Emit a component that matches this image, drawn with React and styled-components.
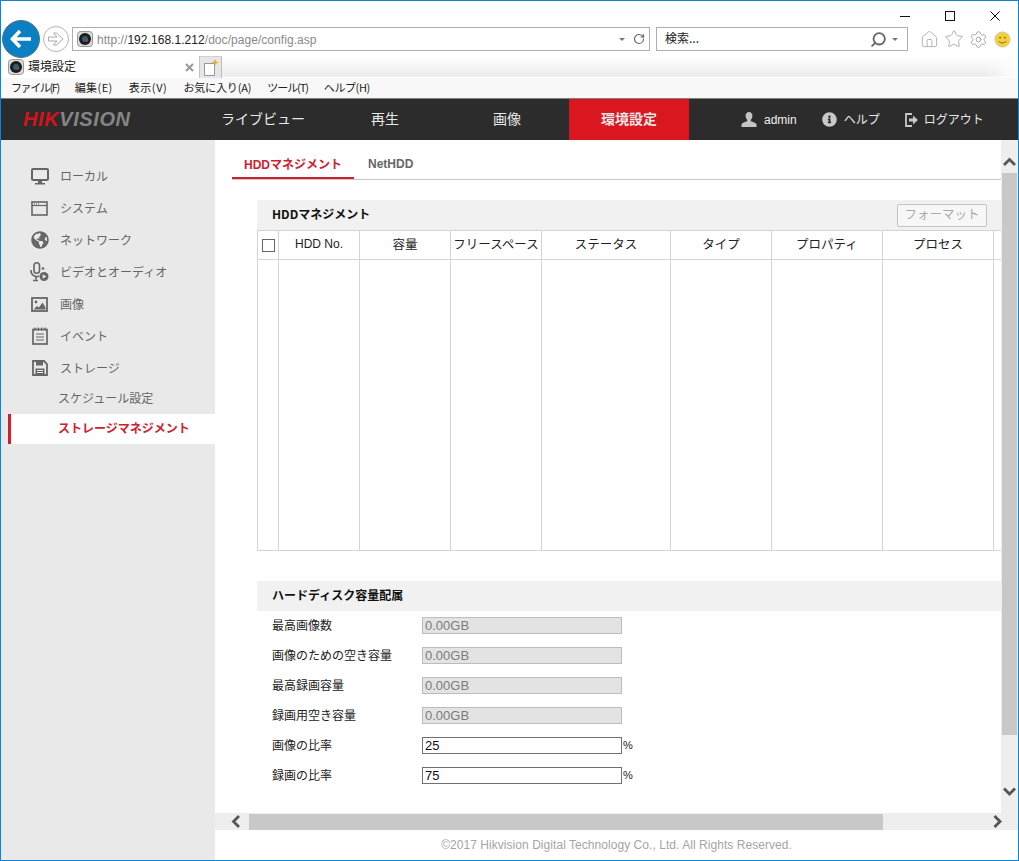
import React from 'react';
import styled, { createGlobalStyle } from 'styled-components';
import { FaGlobeAmericas, FaInfoCircle } from 'react-icons/fa';
import { House, Star, Settings, RotateCw, Search } from 'lucide-react';

const GlobalStyle = createGlobalStyle`
  html, body {
    margin: 0;
    padding: 0;
    background: #fff;
    overflow: hidden;
  }
  * {
    box-sizing: border-box;
  }
`;

const cjk = `"Noto Sans CJK JP", "Liberation Sans", sans-serif`;
const latin = `"Liberation Sans", "Noto Sans CJK JP", sans-serif`;

const Window = styled.div`
  width: 1019px;
  height: 861px;
  border: 1px solid #0f83d8;
  display: flex;
  flex-direction: column;
  overflow: hidden;
  font-family: ${cjk};
  font-size: 12px;
  color: #222;
`;

const TitleBar = styled.div`
  height: 21px;
  flex: none;
  display: flex;
  justify-content: flex-end;
  align-items: flex-start;
  gap: 35px;
  padding: 10px 18px 0 0;
`;

const WinButton = styled.svg`
  width: 10px;
  height: 10px;
  display: block;
`;

const NavBar = styled.div`
  height: 34px;
  flex: none;
  display: flex;
  align-items: center;
  position: relative;
  z-index: 2;
  padding-left: 1px;
`;

const BackButton = styled.div`
  width: 38px;
  height: 38px;
  border-radius: 50%;
  background: #0a7fc4;
  border: 1px solid #5c6f7c;
  display: flex;
  align-items: center;
  justify-content: center;
`;

const ForwardButton = styled.div`
  width: 26px;
  height: 26px;
  margin-left: 3px;
  border-radius: 50%;
  background: #fff;
  border: 1px solid #b5b5b5;
  display: flex;
  align-items: center;
  justify-content: center;
`;

const AddressBox = styled.div`
  width: 578px;
  height: 24px;
  margin-left: 3px;
  border: 1px solid #adadad;
  display: flex;
  align-items: center;
  padding: 0 4px;
  font-family: ${latin};
  font-size: 12px;
  letter-spacing: 0.05px;
  color: #8a8a8a;
`;

const Host = styled.span`
  color: #222;
`;

const AddressText = styled.div`
  flex: 1;
  margin-left: 4px;
  padding-top: 1px;
`;

const Caret = styled.span`
  width: 0;
  height: 0;
  border-left: 3px solid transparent;
  border-right: 3px solid transparent;
  border-top: 3px solid #777;
  margin: 0 8px 0 5px;
`;

const SearchCaret = styled(Caret)`
  margin: 0 0 0 5px;
`;

const SearchBox = styled.div`
  width: 252px;
  height: 24px;
  margin-left: 6px;
  border: 1px solid #adadad;
  display: flex;
  align-items: center;
  padding: 0 9px 0 8px;
  font-size: 12px;
`;

const SearchText = styled.div`
  flex: 1;
  padding-bottom: 3px;
`;

const Mirror = styled.span`
  display: flex;
  transform: scaleX(-1);
`;

const ToolIcons = styled.div`
  display: flex;
  align-items: center;
  gap: 5px;
  margin-left: 12px;
`;

const Smiley = styled.svg`
  width: 17px;
  height: 17px;
  margin-left: 1px;
  display: block;
`;

const TabRow = styled.div`
  height: 22px;
  flex: none;
  display: flex;
  align-items: stretch;
  padding-left: 1px;
`;

const TabFade = styled.div`
  flex: 1;
  background:
    linear-gradient(to right, rgba(255, 255, 255, 0) 96%, #fff 100%),
    linear-gradient(to bottom, #fff 0, #ececec 90%, #fff 100%);
`;

const Tab = styled.div`
  width: 198px;
  background: #fff;
  display: flex;
  align-items: center;
  padding: 0 5px 0 6px;
  gap: 4px;
  border-right: 1px solid #c4c4c4;
`;

const TabTitle = styled.div`
  flex: 1;
  font-size: 12px;
  padding-bottom: 4px;
`;

const TabClose = styled.svg`
  width: 9px;
  height: 9px;
`;

const NewTab = styled.div`
  width: 22px;
  background: #e6e6e6;
  border-right: 1px solid #bdbdbd;
  border-top: 1px solid #d0d0d0;
  display: flex;
  align-items: center;
  justify-content: center;
`;

const MenuBar = styled.div`
  height: 21px;
  flex: none;
  display: flex;
  align-items: center;
  gap: 16px;
  padding: 0 0 2px 10px;
  background: #f8f8f8;
  border-bottom: 1px solid #7f7f7f;
  font-size: 11px;
  color: #222;
`;

const MenuItem = styled.span`
  letter-spacing: ${(p) => p.$tracking}px;
`;

const Header = styled.div`
  height: 41px;
  flex: none;
  background: #2c2c2c;
  display: flex;
  align-items: stretch;
`;

const Logo = styled.div`
  width: 202px;
  padding-left: 22px;
  display: flex;
  align-items: center;
  font-family: ${latin};
  font-size: 20px;
  font-weight: bold;
  font-style: italic;
  letter-spacing: 0.6px;
  color: #858585;
`;

const LogoRed = styled.span`
  color: #d3141c;
`;

const MainNav = styled.div`
  display: flex;
  gap: 2px;
`;

const NavItem = styled.div`
  width: 120px;
  padding-bottom: 3px;
  display: flex;
  align-items: center;
  justify-content: center;
  font-size: 14px;
  font-weight: ${(p) => (p.$active ? 'bold' : 'normal')};
  color: #e8e8e8;
  background: ${(p) => (p.$active ? '#da161e' : 'transparent')};
`;

const UserNav = styled.div`
  display: flex;
  align-items: center;
  margin-left: 52px;
  color: #e8e8e8;
  font-size: 12px;
`;

const UserItem = styled.div`
  display: flex;
  align-items: center;
  gap: ${(p) => p.$gap}px;
  margin-right: 25px;
`;

const UserLabel = styled.span`
  padding-bottom: 2px;
`;

const AdminName = styled.span`
  font-family: ${latin};
  font-size: 12px;
  color: #f0f0f0;
`;

const Body = styled.div`
  flex: 1;
  display: flex;
  min-height: 0;
`;

const Sidebar = styled.div`
  width: 214px;
  flex: none;
  background: #e9e9e9;
  padding-top: 20px;
`;

const SideItem = styled.div`
  height: 32px;
  display: flex;
  align-items: center;
  padding-left: 29px;
  gap: 11px;
  color: #666;
  font-size: 12px;
`;

const SideLabel = styled.span`
  padding-bottom: 2px;
`;

const SideIcon = styled.span`
  width: 19px;
  display: flex;
  justify-content: center;
  align-items: center;
`;

const SubItem = styled.div`
  height: 30px;
  margin-left: 7px;
  padding-left: ${(p) => (p.$active ? 47 : 50)}px;
  padding-bottom: 3px;
  display: flex;
  align-items: center;
  font-size: 12px;
  color: ${(p) => (p.$active ? '#cf2030' : '#666')};
  font-weight: ${(p) => (p.$active ? 'bold' : 'normal')};
  background: ${(p) => (p.$active ? '#fff' : 'transparent')};
  border-left: ${(p) => (p.$active ? '3px solid #cf2030' : 'none')};
`;

const Content = styled.div`
  flex: 1;
  min-width: 0;
  display: flex;
  flex-direction: column;
`;

const ViewRow = styled.div`
  flex: 1;
  min-height: 0;
  display: flex;
`;

const Page = styled.div`
  flex: 1;
  min-width: 0;
  overflow: hidden;
  padding-top: 10px;
`;

const Tabs = styled.div`
  height: 30px;
  margin-left: 17px;
  border-bottom: 1px solid #c8c8c8;
  display: flex;
`;

const PageTab = styled.div`
  height: 29px;
  padding: 0 12px 1px;
  display: flex;
  align-items: center;
  font-size: 12px;
  font-weight: bold;
  color: ${(p) => (p.$active ? '#cf2030' : '#666')};
  border-bottom: ${(p) => (p.$active ? '2px solid #cf2030' : 'none')};
  margin-right: 2px;
  font-family: ${latin};
`;

const Section = styled.div`
  margin: ${(p) => p.$top}px 0 0 42px;
`;

const SectionHead = styled.div`
  height: 30px;
  background: #f1f1f1;
  display: flex;
  align-items: center;
  justify-content: space-between;
  padding: 0 14px 0 15px;
  font-size: 12px;
  font-weight: bold;
  color: #111;
`;

const HeadTitle = styled.span`
  padding-bottom: 3px;
`;

const FormatButton = styled.div`
  width: 90px;
  height: 23px;
  padding-bottom: 3px;
  border: 1px solid #c4c4c4;
  border-radius: 2px;
  background: #f7f7f7;
  color: #aaa;
  font-size: 12.5px;
  font-weight: normal;
  display: flex;
  align-items: center;
  justify-content: center;
`;

const Table = styled.div`
  width: 800px;
  border-left: 1px solid #d4d4d4;
  border-top: 1px solid #d4d4d4;
`;

const Row = styled.div`
  display: grid;
  grid-template-columns: 21px 81px 91px 91px 129px 101px 111px 111px 1fr;
  height: ${(p) => p.$height}px;
  border-bottom: 1px solid #d4d4d4;
`;

const Cell = styled.div`
  border-right: 1px solid #d4d4d4;
  padding-bottom: 3px;
  display: flex;
  align-items: center;
  justify-content: center;
  font-size: 12.5px;
  color: #222;
  white-space: nowrap;
`;

const LatinCell = styled(Cell)`
  font-family: ${latin};
  font-size: 12px;
  padding-bottom: 2px;
`;

const Check = styled.span`
  width: 13px;
  height: 13px;
  margin-top: 3px;
  border: 1px solid #666;
  background: #fff;
`;

const FormRow = styled.div`
  height: 30px;
  display: flex;
  align-items: center;
  padding: 0 0 2px 15px;
`;

const FormLabel = styled.div`
  width: 150px;
  padding-bottom: 2px;
  font-size: 12px;
  color: #222;
`;

const Field = styled.div`
  width: 200px;
  height: 17px;
  padding-left: 2px;
  display: flex;
  align-items: center;
  font-family: ${latin};
  font-size: 13px;
  border: 1px solid ${(p) => (p.$off ? '#bcbcbc' : '#707070')};
  background: ${(p) => (p.$off ? '#e3e3e3' : '#fff')};
  color: ${(p) => (p.$off ? '#7c7c7c' : '#111')};
`;

const Unit = styled.span`
  margin-left: 1px;
  font-family: ${latin};
  font-size: 11px;
`;

const VScroll = styled.div`
  width: 17px;
  flex: none;
  background: #eee;
  display: flex;
  flex-direction: column;
  align-items: center;
  padding-top: 15px;
`;

const VThumb = styled.div`
  width: 15px;
  height: 562px;
  margin: 3px 0 49px;
  flex: none;
  background: #c8c8c8;
`;

const HScroll = styled.div`
  height: 17px;
  flex: none;
  background: #eee;
  display: flex;
  align-items: center;
  padding-left: 14px;
`;

const HThumb = styled.div`
  width: 634px;
  height: 16px;
  margin: 0 107px 0 5px;
  background: #c8c8c8;
`;

const ChevronSvg = styled.svg`
  width: 15px;
  height: 15px;
  flex: none;
`;

const Footer = styled.div`
  height: 30px;
  flex: none;
  display: flex;
  align-items: center;
  justify-content: center;
  font-family: ${latin};
  font-size: 12px;
  letter-spacing: 0.05px;
  color: #a5a5a5;
`;

const CameraIcon = () => (
  <svg width="16" height="16" viewBox="0 0 16 16">
    <rect x="0.5" y="0.5" width="15" height="15" rx="3" fill="#d9d9d9" stroke="#999" />
    <circle cx="8" cy="8" r="6" fill="#1c1c1c" />
    <circle cx="8" cy="8" r="3" fill="#2f5f7e" />
    <circle cx="10" cy="9.5" r="1.3" fill="#c0303a" />
  </svg>
);

const Chevron = ({ dir }) => {
  const paths = {
    up: 'M2 10 L7.5 4.5 L13 10',
    down: 'M2 4.5 L7.5 10 L13 4.5',
    left: 'M10 2 L4.5 7.5 L10 13',
    right: 'M4.5 2 L10 7.5 L4.5 13',
  };
  return (
    <ChevronSvg viewBox="0 0 15 15">
      <path d={paths[dir]} fill="none" stroke="#555" strokeWidth="2.8" />
    </ChevronSvg>
  );
};

const MonitorIcon = () => (
  <svg width="18" height="17" viewBox="0 0 18 17">
    <rect x="1" y="1" width="16" height="11" rx="1" fill="none" stroke="#666" strokeWidth="2" />
    <path d="M7 13 h4 v2 h3 v1.5 h-10 v-1.5 h3 z" fill="#666" />
  </svg>
);

const SystemIcon = () => (
  <svg width="17" height="15" viewBox="0 0 17 15">
    <rect x="1" y="1" width="15" height="13" fill="none" stroke="#666" strokeWidth="1.6" />
    <path d="M1 4.5 h15" stroke="#666" strokeWidth="1.2" />
    <path d="M3 3 h1 M5 3 h1 M7 3 h1" stroke="#666" strokeWidth="1" />
  </svg>
);

const MicIcon = () => (
  <svg width="19" height="20" viewBox="0 0 19 20">
    <rect x="4" y="0.8" width="5.5" height="10.5" rx="2.7" fill="none" stroke="#666" strokeWidth="1.6" />
    <path d="M1 8 v1 a5.6 5.6 0 0 0 8 5" fill="none" stroke="#666" strokeWidth="1.6" />
    <path d="M6 15 v2.5 M3 18.5 h5" stroke="#666" strokeWidth="1.6" />
    <circle cx="13" cy="6.5" r="1.3" fill="#666" />
    <circle cx="14" cy="14.5" r="4.5" fill="#666" />
    <path d="M12.7 12.2 l3.6 2.3 l-3.6 2.3 z" fill="#e9e9e9" />
  </svg>
);

const ImageIcon = () => (
  <svg width="17" height="15" viewBox="0 0 17 15">
    <rect x="1" y="1" width="15" height="13" fill="none" stroke="#666" strokeWidth="1.8" />
    <circle cx="5" cy="5" r="1.4" fill="#666" />
    <path d="M2.5 12.5 l3.5 -3.5 l2 1.5 l3.5 -5 l3 5 v2 z" fill="#666" />
  </svg>
);

const EventIcon = () => (
  <svg width="16" height="18" viewBox="0 0 16 18">
    <rect x="1" y="2.5" width="14" height="14.5" fill="none" stroke="#666" strokeWidth="1.7" />
    <path d="M3 0.5 v3 M6.3 0.5 v3 M9.7 0.5 v3 M13 0.5 v3" stroke="#666" strokeWidth="1.3" />
    <path d="M4 7 h8 M4 10 h8 M4 13 h8" stroke="#666" strokeWidth="1.2" />
  </svg>
);

const SaveIcon = () => (
  <svg width="16" height="16" viewBox="0 0 16 16">
    <path d="M1 1 h11 l3 3 v11 h-14 z" fill="none" stroke="#666" strokeWidth="1.8" />
    <path d="M4 1 h7 v4.5 h-7 z" fill="#666" />
    <rect x="3.5" y="8.5" width="9" height="6" fill="#666" />
    <path d="M5 10.5 h6 M5 12.5 h6" stroke="#e9e9e9" strokeWidth="1" />
  </svg>
);

const UserIcon = () => (
  <svg width="16" height="15" viewBox="0 0 16 15">
    <path d="M8 0 a3.4 3.4 0 0 1 3.4 3.8 c0 2 -1 3.4 -1.6 4 v1.4 c2 .6 5.2 1.6 5.7 3 v2.8 h-15 v-2.8 c.5 -1.4 3.7 -2.4 5.7 -3 v-1.4 c-.6 -.6 -1.6 -2 -1.6 -4 a3.4 3.4 0 0 1 3.4 -3.8 z" fill="#c4c4c4" />
  </svg>
);

const LogoutIcon = () => (
  <svg width="13" height="14" viewBox="0 0 13 14">
    <path d="M7 1 h-6 v12 h6" fill="none" stroke="#c8c8c8" strokeWidth="1.8" />
    <path d="M4 5.5 h4 v-3 l5 4.5 l-5 4.5 v-3 h-4 z" fill="#c8c8c8" />
  </svg>
);

const sideItems = [
  { label: 'ローカル', icon: <MonitorIcon /> },
  { label: 'システム', icon: <SystemIcon /> },
  { label: 'ネットワーク', icon: <FaGlobeAmericas size={18} color="#666" /> },
  { label: 'ビデオとオーディオ', icon: <MicIcon /> },
  { label: '画像', icon: <ImageIcon /> },
  { label: 'イベント', icon: <EventIcon /> },
  { label: 'ストレージ', icon: <SaveIcon /> },
];

const menus = [
  { label: 'ファイル(F)', tracking: -1.4 },
  { label: '編集(E)', tracking: 0.4 },
  { label: '表示(V)', tracking: 0.6 },
  { label: 'お気に入り(A)', tracking: -0.15 },
  { label: 'ツール(T)', tracking: -1.1 },
  { label: 'ヘルプ(H)', tracking: -0.4 },
];
const navs = ['ライブビュー', '再生', '画像', '環境設定'];
const columns = ['容量', 'フリースペース', 'ステータス', 'タイプ', 'プロパティ', 'プロセス'];

const capacityRows = [
  { label: '最高画像数', value: '0.00GB', off: true },
  { label: '画像のための空き容量', value: '0.00GB', off: true },
  { label: '最高録画容量', value: '0.00GB', off: true },
  { label: '録画用空き容量', value: '0.00GB', off: true },
  { label: '画像の比率', value: '25', unit: '%' },
  { label: '録画の比率', value: '75', unit: '%' },
];

const App = () => {
  return (
    <Window>
      <GlobalStyle />
      <TitleBar>
        <WinButton viewBox="0 0 10 10">
          <path d="M0 5.5 h10" stroke="#111" strokeWidth="1" />
        </WinButton>
        <WinButton viewBox="0 0 10 10">
          <rect x="0.5" y="0.5" width="9" height="9" fill="none" stroke="#111" />
        </WinButton>
        <WinButton viewBox="0 0 10 10">
          <path d="M0.5 0.5 L9.5 9.5 M9.5 0.5 L0.5 9.5" stroke="#111" strokeWidth="1" />
        </WinButton>
      </TitleBar>

      <NavBar>
        <BackButton>
          <svg width="22" height="20" viewBox="0 0 22 20">
            <path d="M10 2 L2.5 10 L10 18 M3 10 H21" fill="none" stroke="#fff" strokeWidth="3.6" />
          </svg>
        </BackButton>
        <ForwardButton>
          <svg width="18" height="16" viewBox="0 0 18 16">
            <path d="M1.5 6 H10 L6.5 2 H9.5 L16 8 L9.5 14 H6.5 L10 10 H1.5 Z" fill="#fff" stroke="#aaa" strokeWidth="1" />
          </svg>
        </ForwardButton>
        <AddressBox>
          <CameraIcon />
          <AddressText>
            http://<Host>192.168.1.212</Host>/doc/page/config.asp
          </AddressText>
          <Caret />
          <RotateCw size={12} color="#666" strokeWidth={2.4} />
        </AddressBox>
        <SearchBox>
          <SearchText>検索...</SearchText>
          <Mirror>
            <Search size={17} color="#666" strokeWidth={2.6} />
          </Mirror>
          <SearchCaret />
        </SearchBox>
        <ToolIcons>
          <House size={19} color="#aaa" strokeWidth={1.1} />
          <Star size={20} color="#aaa" strokeWidth={1.1} />
          <Settings size={19} color="#999" strokeWidth={1.1} />
          <Smiley viewBox="0 0 18 18">
            <circle cx="9" cy="9" r="8" fill="#f2d13c" stroke="#c9c9a0" />
            <circle cx="6.5" cy="7" r="1" fill="#7a6a10" />
            <circle cx="11.5" cy="7" r="1" fill="#7a6a10" />
            <path d="M5 11 q4 3.4 8 0" fill="none" stroke="#7a6a10" strokeWidth="1" />
          </Smiley>
        </ToolIcons>
      </NavBar>

      <TabRow>
        <Tab>
          <CameraIcon />
          <TabTitle>環境設定</TabTitle>
          <TabClose viewBox="0 0 9 9">
            <path d="M1 1 L8 8 M8 1 L1 8" stroke="#999" strokeWidth="2" />
          </TabClose>
        </Tab>
        <NewTab>
          <svg width="16" height="18" viewBox="0 0 16 18">
            <rect x="1.5" y="4.5" width="10" height="12" fill="#fff" stroke="#999" />
            <path d="M12 0 l1 2.4 l2.6 1 l-2.6 1 l-1 2.6 l-1 -2.6 l-2.6 -1 l2.6 -1 z" fill="#f5a623" />
          </svg>
        </NewTab>
        <TabFade />
      </TabRow>

      <MenuBar>
        {menus.map((m) => (
          <MenuItem key={m.label} $tracking={m.tracking}>
            {m.label}
          </MenuItem>
        ))}
      </MenuBar>

      <Header>
        <Logo>
          <LogoRed>HIK</LogoRed>VISION
        </Logo>
        <MainNav>
          {navs.map((n, i) => (
            <NavItem key={n} $active={i === 3}>
              {n}
            </NavItem>
          ))}
        </MainNav>
        <UserNav>
          <UserItem $gap={7}>
            <UserIcon />
            <AdminName>admin</AdminName>
          </UserItem>
          <UserItem $gap={7}>
            <FaInfoCircle size={15} color="#c8c8c8" />
            <UserLabel>ヘルプ</UserLabel>
          </UserItem>
          <UserItem $gap={6}>
            <LogoutIcon />
            <UserLabel>ログアウト</UserLabel>
          </UserItem>
        </UserNav>
      </Header>

      <Body>
        <Sidebar>
          {sideItems.map((item) => (
            <SideItem key={item.label}>
              <SideIcon>{item.icon}</SideIcon>
              <SideLabel>{item.label}</SideLabel>
            </SideItem>
          ))}
          <SubItem>スケジュール設定</SubItem>
          <SubItem $active>ストレージマネジメント</SubItem>
        </Sidebar>

        <Content>
          <ViewRow>
            <Page>
              <Tabs>
                <PageTab $active>HDDマネジメント</PageTab>
                <PageTab>NetHDD</PageTab>
              </Tabs>

              <Section $top={20}>
                <SectionHead>
                  <HeadTitle>HDDマネジメント</HeadTitle>
                  <FormatButton>フォーマット</FormatButton>
                </SectionHead>
                <Table>
                  <Row $height={29}>
                    <Cell>
                      <Check />
                    </Cell>
                    <LatinCell>HDD No.</LatinCell>
                    {columns.map((c) => (
                      <Cell key={c}>{c}</Cell>
                    ))}
                    <Cell />
                  </Row>
                  <Row $height={291}>
                    {Array.from({ length: 9 }).map((_, i) => (
                      <Cell key={i} />
                    ))}
                  </Row>
                </Table>
              </Section>

              <Section $top={30}>
                <SectionHead>
                  <HeadTitle>ハードディスク容量配属</HeadTitle>
                </SectionHead>
                {capacityRows.map((r) => (
                  <FormRow key={r.label}>
                    <FormLabel>{r.label}</FormLabel>
                    <Field $off={r.off}>{r.value}</Field>
                    {r.unit && <Unit>{r.unit}</Unit>}
                  </FormRow>
                ))}
              </Section>
            </Page>
            <VScroll>
              <Chevron dir="up" />
              <VThumb />
              <Chevron dir="down" />
            </VScroll>
          </ViewRow>
          <HScroll>
            <Chevron dir="left" />
            <HThumb />
            <Chevron dir="right" />
          </HScroll>
          <Footer>©2017 Hikvision Digital Technology Co., Ltd. All Rights Reserved.</Footer>
        </Content>
      </Body>
    </Window>
  );
};

export default App;
